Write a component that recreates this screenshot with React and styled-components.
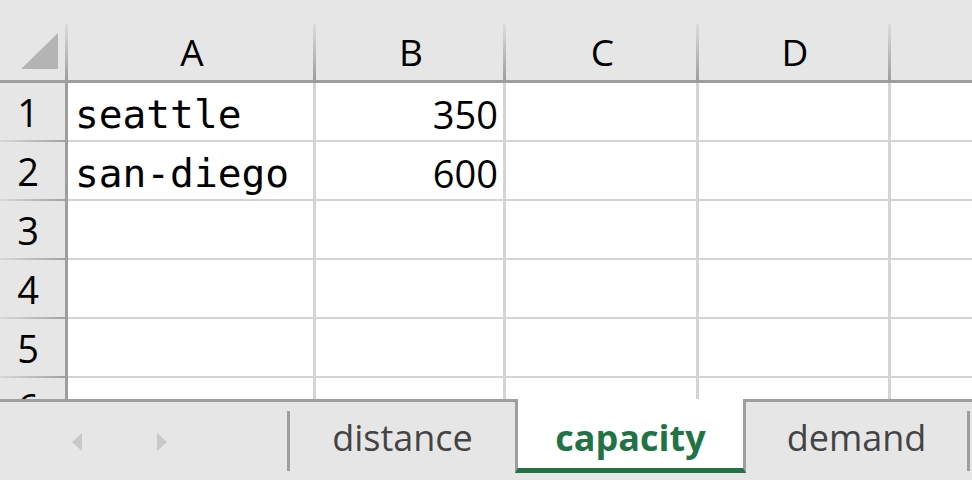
import React from 'react'
import styled, { createGlobalStyle } from 'styled-components'

const GlobalStyle = createGlobalStyle`
    html, body {
        margin: 0;
        padding: 0;
        background: #ffffff;
    }
    * {
        box-sizing: border-box;
    }
`

const Sheet = styled.div`
    width: 972px;
    height: 480px;
    overflow: hidden;
    display: flex;
    flex-direction: column;
    background: #ffffff;
    font-family: "Open Sans", "Liberation Sans", sans-serif;
`

const TopStrip = styled.div`
    height: 24px;
    flex: none;
    background: #e6e6e6;
`

const Grid = styled.div`
    height: 375px;
    flex: none;
    overflow: hidden;
    display: grid;
    grid-template-columns: 68px 248px 190px 193px 192px 1fr;
    grid-auto-rows: 59px;
`

const HeaderCell = styled.div`
    display: flex;
    align-items: center;
    justify-content: center;
    border-bottom: 3px solid #9e9e9e;
    background: ${p => p.$last
        ? '#e6e6e6'
        : 'linear-gradient(to bottom, #dcdcdc, #9e9e9e) right top / 3px 100% no-repeat, #e6e6e6'};
    font-size: 37px;
    color: #000;
    padding-bottom: 2px;
`

const RowHeader = styled.div`
    display: flex;
    align-items: center;
    justify-content: center;
    border-right: 3px solid #9e9e9e;
    background: linear-gradient(to right, #d8d8d8, #a2a2a2) left bottom / 100% 2px no-repeat, #e6e6e6;
    font-size: 38px;
    color: #000;
    padding: 0 9px 2px 0;
`

const Cell = styled.div`
    display: flex;
    align-items: center;
    justify-content: ${p => (p.$num ? 'flex-end' : 'flex-start')};
    padding: 4px ${p => (p.$num ? '5px' : '0')} 0 ${p => (p.$num ? '0' : '7px')};
    border-right: ${p => (p.$last ? 'none' : '3px solid #d4d4d4')};
    border-bottom: 2px solid #d4d4d4;
    font-family: ${p => (p.$num
        ? '"Open Sans", "Liberation Sans", sans-serif'
        : '"DejaVu Sans Mono", "Liberation Mono", monospace')};
    font-size: ${p => (p.$num ? '38px' : '39.5px')};
    color: #000;
    white-space: nowrap;
`

const TabBar = styled.div`
    height: 81px;
    flex: none;
    display: flex;
    align-items: flex-start;
    background: #e6e6e6;
    border-top: 3px solid #9e9e9e;
`

const NavArea = styled.div`
    width: 287px;
    height: 78px;
    display: flex;
    align-items: center;
    gap: 75px;
    padding-left: 72px;
    padding-top: 2px;
`

const Separator = styled.div`
    width: 3px;
    height: 60px;
    margin-top: 9px;
    background: #9e9e9e;
`

const Tab = styled.div`
    width: ${p => p.$width}px;
    height: ${p => (p.$active ? 74 : 71)}px;
    margin-top: ${p => (p.$active ? -3 : 0)}px;
    padding-top: ${p => (p.$active ? 7 : 0)}px;
    display: flex;
    align-items: center;
    justify-content: center;
    font-size: 36px;
    font-weight: ${p => (p.$active ? 700 : 400)};
    color: ${p => (p.$active ? '#217346' : '#444444')};
    background: ${p => (p.$active ? '#ffffff' : 'transparent')};
    border-left: ${p => (p.$active ? '3px solid #9e9e9e' : 'none')};
    border-right: ${p => (p.$active ? '3px solid #9e9e9e' : 'none')};
    border-bottom: ${p => (p.$active ? '5px solid #217346' : 'none')};
`

const columns = ['A', 'B', 'C', 'D', '']

const rows = [
    ['seattle', 350],
    ['san-diego', 600],
    [],
    [],
    [],
    [],
]

const tabs = [
    { name: 'distance', width: 225 },
    { name: 'capacity', width: 231, active: true },
    { name: 'demand', width: 221 },
]

function Corner() {
    return (
        <HeaderCell>
            <svg width="65" height="56" viewBox="0 0 65 56">
                <polygon points="19,46 56,46 56,10" fill="#b4b4b4" />
            </svg>
        </HeaderCell>
    )
}

function Arrow({ dir }) {
    return (
        <svg width="10" height="18" viewBox="0 0 10 18">
            {dir === 'left'
                ? <polygon points="0,9 10,0 10,18" fill="#c8c8c8" />
                : <polygon points="0,0 10,9 0,18" fill="#c8c8c8" />}
        </svg>
    )
}

export default function App() {
    return (
        <Sheet>
            <GlobalStyle />
            <TopStrip />
            <Grid>
                <Corner />
                {columns.map((c, i) => (
                    <HeaderCell key={i} $last={i === columns.length - 1}>{c}</HeaderCell>
                ))}
                {rows.map((r, i) => (
                    <React.Fragment key={i}>
                        <RowHeader>{i + 1}</RowHeader>
                        {columns.map((c, j) => {
                            const v = r[j]
                            return (
                                <Cell key={j} $num={typeof v === 'number'} $last={j === columns.length - 1}>
                                    {v}
                                </Cell>
                            )
                        })}
                    </React.Fragment>
                ))}
            </Grid>
            <TabBar>
                <NavArea>
                    <Arrow dir="left" />
                    <Arrow dir="right" />
                </NavArea>
                <Separator />
                {tabs.map(t => (
                    <Tab key={t.name} $width={t.width} $active={t.active}>{t.name}</Tab>
                ))}
                <Separator />
            </TabBar>
        </Sheet>
    )
}
